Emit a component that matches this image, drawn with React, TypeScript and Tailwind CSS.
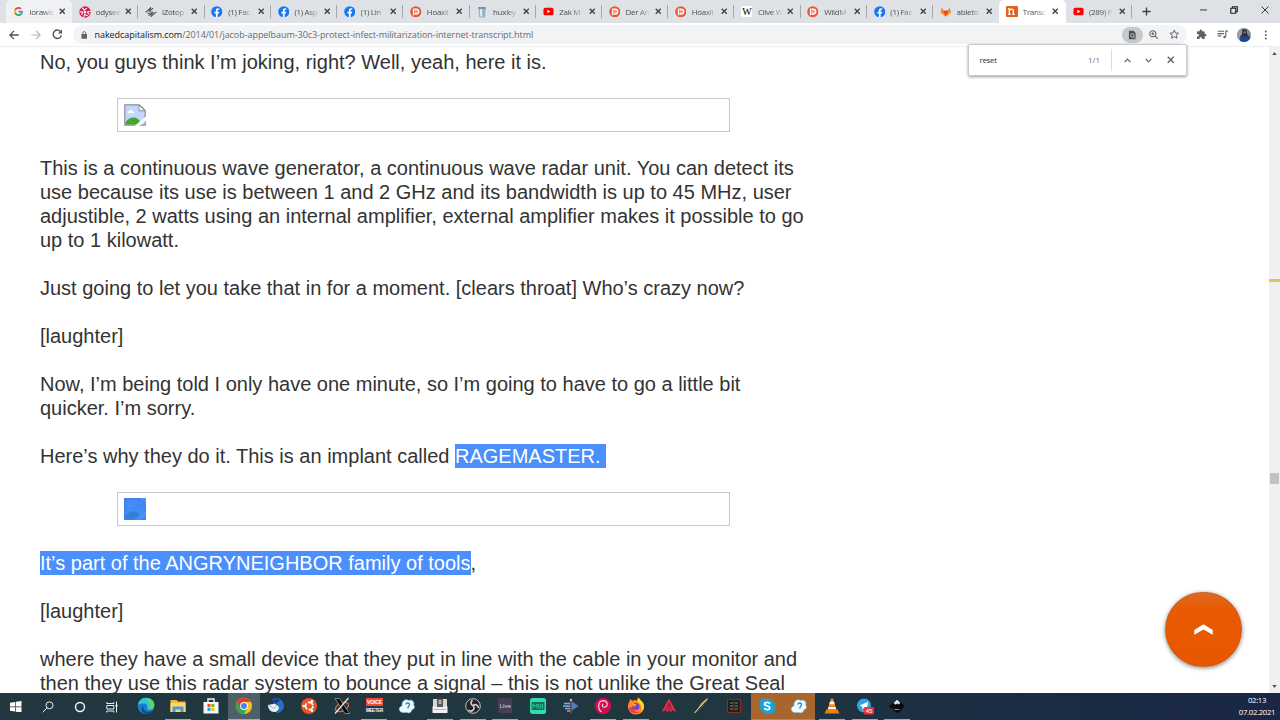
import type { ReactNode } from "react";

const UI = "font-['Open_Sans','Noto_Sans',sans-serif]";

function Facebook() {
  return (
    <svg viewBox="0 0 12 12" className="size-[11.5px]">
      <circle cx="6" cy="6" r="5.8" fill="#1877f2" />
      <path d="M5.1 11.8V7.7H3.6V6h1.5V4.7c0-1.5.9-2.3 2.2-2.3l1.3.1v1.5h-.8c-.7 0-.9.4-.9.9V6h1.6l-.3 1.7H6.9v4.1z" fill="#fff" />
    </svg>
  );
}
function Patreon() {
  return (
    <svg viewBox="0 0 12 12" className="size-[11.5px]">
      <circle cx="6" cy="6" r="5.8" fill="#e6583f" />
      <path d="M3 2.500h3.500a3.300 3.300 0 0 1 0 6.600H5L3 9.800z" fill="#fff" />
      <circle cx="6.600" cy="5.800" r="1.900" fill="#f0a393" />
      <path d="M4.500 3v6" stroke="#e6583f" strokeWidth=".7" />
    </svg>
  );
}
function YouTube() {
  return (
    <svg viewBox="0 0 12 12" className="size-[11px]">
      <rect x="0.5" y="1.9" width="11" height="8.2" rx="2" fill="#f00" />
      <path d="M4.8 4.2v3.6L8 6z" fill="#fff" />
    </svg>
  );
}
function Google() {
  return (
    <svg viewBox="0 0 48 48" className="size-[9px]">
      <path fill="#EA4335" d="M24 9.5c3.5 0 6.700 1.200 9.200 3.600l6.900-6.900C35.900 2.400 30.500 0 24 0 14.600 0 6.500 5.400 2.600 13.200l8 6.200C12.400 13.700 17.700 9.500 24 9.500z" />
      <path fill="#4285F4" d="M47 24.500c0-1.600-.2-3.100-.4-4.500H24v9h12.900c-.6 3-2.200 5.500-4.700 7.200l7.700 6C44.400 38 47 31.800 47 24.500z" />
      <path fill="#FBBC05" d="M10.500 28.600a14.500 14.500 0 0 1 0-9.200l-8-6.200a24 24 0 0 0 0 21.600z" />
      <path fill="#34A853" d="M24 48c6.500 0 11.900-2.100 15.900-5.800l-7.700-6c-2.200 1.400-4.900 2.300-8.200 2.300-6.300 0-11.600-4.200-13.500-9.900l-8 6.200C6.500 42.600 14.600 48 24 48z" />
    </svg>
  );
}
function Odysee() {
  return (
    <svg viewBox="0 0 12 12" className="size-[12px]">
      <circle cx="6" cy="6" r="5.7" fill="#dc1650" />
      <path d="M3.300 1.700 5.200 4.200 7.700 2.300M.8 5.800l2.900.1L2.600 8.900M4.900 11.300l.5-2.900 3.300 1.300M11.400 5.200 8.500 6l1.600 2.500" fill="none" stroke="#fff" strokeWidth="1.100" />
      <circle cx="6" cy="6.200" r="1.200" fill="#fff" />
    </svg>
  );
}
function Izotope() {
  return (
    <svg viewBox="0 0 12 12" className="size-[12px]" fill="none" stroke="#55595e" strokeWidth="1.100">
      <path d="M.6 6.300 5.200 2.300 4.700 4.700 8.200 2.200M3.300 5.300 8.700 6.600M3.500 9.800 6.900 7.300 6.700 9.700 11.400 5.800M2.500 7.300l5.800 1M5.500 1v2M6.300 9v2" />
    </svg>
  );
}
function Cup() {
  return (
    <svg viewBox="0 0 12 12" className="size-[12px]">
      <path d="M2.300 1h7.400L9 11.400H3.200z" fill="#8fb4c2" />
      <path d="M2.300 1h7.400l-.2 2h-7z" fill="#6d96a6" />
      <path d="M3.800 3h2.400v7.500H4.300z" fill="#dcebf0" />
    </svg>
  );
}
function Wiki() {
  return (
    <span className="flex size-[11px] items-center justify-center rounded-[2px] bg-white font-['Liberation_Serif',serif] text-[10px] leading-none text-black">
      W
    </span>
  );
}
function Gitlab() {
  return (
    <svg viewBox="0 0 12 12" className="size-[11.5px]">
      <path d="m6 11 5.400-4L10 1.500 8.300 5H3.700L2 1.500.6 7z" fill="#fc6d26" />
      <path d="M6 11 3.700 5h4.600z" fill="#e24329" />
      <path d="M.6 7 2 5l4 6zM11.400 7 10 5l-4 6z" fill="#fca326" />
    </svg>
  );
}
function Naked() {
  return (
    <span className="flex size-[11.500px] items-center justify-center rounded-[1px] bg-[#e0601c]">
      <svg viewBox="0 0 12 12" className="size-[11px]" fill="none" stroke="#fff" strokeWidth="1.500">
        <path d="M2 3.300h1.700V9M2.300 9.200h2.800M4 4.600C5.500 2.800 8 3 8 5v4M6.800 9.200h2.900" />
      </svg>
    </span>
  );
}

function Cross({ className = "size-[6.500px]" }: { className?: string }) {
  return (
    <svg viewBox="0 0 8 8" className={className} stroke="#3c4043" strokeWidth="1.600" fill="none">
      <path d="m.9.900 6.200 6.200M7.100.900.900 7.100" />
    </svg>
  );
}

type Tab = { icon: ReactNode; title: string; state?: "hover" | "active"; sep?: boolean };
const tabs: Tab[] = [
  { icon: <Google />, title: "lorawa", state: "hover" },
  { icon: <Odysee />, title: "odysee", sep: true },
  { icon: <Izotope />, title: "iZotop", sep: true },
  { icon: <Facebook />, title: "(1) Fac", sep: true },
  { icon: <Facebook />, title: "(1) Asp", sep: true },
  { icon: <Facebook />, title: "(1) Lin", sep: true },
  { icon: <Patreon />, title: "Hoaxil", sep: true },
  { icon: <Cup />, title: "huxley", sep: true },
  { icon: <YouTube />, title: "Zak M", sep: true },
  { icon: <Patreon />, title: "Der An", sep: true },
  { icon: <Patreon />, title: "Hoaxil", sep: true },
  { icon: <Wiki />, title: "Clive W", sep: true },
  { icon: <Patreon />, title: "WildM", sep: true },
  { icon: <Facebook />, title: "(1) Fac", sep: true },
  { icon: <Gitlab />, title: "ableto" },
  { icon: <Naked />, title: "Transc", state: "active" },
  { icon: <YouTube />, title: "(289) F", sep: true },
];

function TabItem({ tab }: { tab: Tab }) {
  const bg = tab.state === "active" ? "rounded-t-[5px] bg-white" : tab.state === "hover" ? "rounded-t-[5px] bg-[#f0f1f3]" : "";
  return (
    <div className={`flex h-[23px] w-[66.220px] shrink-0 items-center pl-[6.500px] ${bg}`}>
      <span className="flex w-[12px] shrink-0 justify-center">{tab.icon}</span>
      <span className="ml-[5px] w-[26px] shrink-0 whitespace-nowrap text-[8px] leading-[12px] tracking-[-0.300px] text-[#4a4e53] [mask-image:linear-gradient(to_right,black_50%,transparent_100%)]">
        {tab.title}
      </span>
      <span className="ml-[3.500px] flex w-[7px] shrink-0">
        <Cross />
      </span>
      <span className={`ml-auto h-[13px] w-px ${tab.sep ? "bg-[#a3a6aa]" : ""}`} />
    </div>
  );
}

function TabStrip() {
  return (
    <div className="flex h-[23px] items-center bg-[#dee1e6] pl-[6px]">
      {tabs.map((t, i) => (
        <TabItem key={i} tab={t} />
      ))}
      <svg viewBox="0 0 10 10" className="ml-[10px] size-[9px]" stroke="#3c4043" strokeWidth="1.500">
        <path d="M5 .5v9M.5 5h9" />
      </svg>
      <div className="mb-[4px] ml-auto flex items-center gap-[23px] pr-[11.500px]">
        <svg viewBox="0 0 8 8" className="size-[7px]" stroke="#222" strokeWidth="1">
          <path d="M0 4.500h8" />
        </svg>
        <svg viewBox="0 0 8 8" className="size-[8px]" fill="none" stroke="#222" strokeWidth="1.100">
          <path d="M.8 2.300h4.900v4.900H.8zM2.400 2.100V.7h4.900v4.900H5.900" />
        </svg>
        <svg viewBox="0 0 8 8" className="size-[8px]" stroke="#222" strokeWidth=".9">
          <path d="m.5.500 7 7m0-7-7 7" />
        </svg>
      </div>
    </div>
  );
}

function Toolbar() {
  return (
    <div className="flex h-[24px] items-center border-b border-[#eceef0] bg-white pl-[9px]">
      <svg viewBox="0 0 10 10" className="size-[10px]" fill="none" stroke="#4d5156" strokeWidth="1.300">
        <path d="M9.700 5H1.200M5 .900.900 5 5 9.100" />
      </svg>
      <svg viewBox="0 0 10 10" className="ml-[12px] size-[10px]" fill="none" stroke="#b4b6b9" strokeWidth="1.200">
        <path d="M.3 5h8.500M5 .900 9.100 5 5 9.100" />
      </svg>
      <svg viewBox="0 0 10 10" className="ml-[11px] size-[10.500px]" fill="none" stroke="#4d5156" strokeWidth="1.300">
        <path d="M8.600 3A4 4 0 1 0 9 6" />
        <path d="M9.500.500v3.700H5.800z" fill="#4d5156" stroke="none" />
      </svg>
      <div className="ml-[10px] flex h-[18.500px] w-[1114px] items-center rounded-full bg-[#f1f3f4] pl-[8px]">
        <svg viewBox="0 0 8 10" className="h-[8px] w-[6.500px]">
          <rect x=".5" y="3.700" width="7" height="6" rx=".8" fill="#5f6368" />
          <path d="M2.100 4V2.600a1.900 1.900 0 0 1 3.800 0V4" fill="none" stroke="#5f6368" strokeWidth="1.100" />
        </svg>
        <span className="ml-[7.500px] whitespace-nowrap text-[9px] leading-[14px] tracking-[-0.055px] text-[#676b70]">
          <span className="text-[#202124]">nakedcapitalism.com</span>
          /2014/01/jacob-appelbaum-30c3-protect-infect-militarization-internet-transcript.html
        </span>
        <div className="ml-auto flex items-center pr-[7px]">
          <span className="flex h-[16px] w-[21px] items-center justify-center rounded-full bg-[#c6c8ca]">
            <svg viewBox="0 0 10 12" className="h-[10px] w-[8.500px]">
              <path d="M1 1h5.500L9 3.500V11H1z" fill="#4d5156" />
              <circle cx="5" cy="6.500" r="2.100" fill="none" stroke="#d3d5d7" strokeWidth="1" />
              <path d="m6.500 8 1.500 2" stroke="#d3d5d7" />
            </svg>
          </span>
          <svg viewBox="0 0 10 10" className="ml-[6px] size-[9.500px]" fill="none" stroke="#5f6368" strokeWidth="1.100">
            <circle cx="4" cy="4" r="3.200" />
            <path d="M6.300 6.300 9.500 9.500M2.400 4h3.200M4 2.400v3.200" />
          </svg>
          <svg viewBox="0 0 12 12" className="ml-[11px] size-[10.500px]" fill="none" stroke="#5f6368" strokeWidth="1.100">
            <path d="m6 1.200 1.400 3.300 3.600.3-2.700 2.300.8 3.500L6 8.700l-3.100 1.900.8-3.500L1 4.800l3.600-.3z" />
          </svg>
        </div>
      </div>
      <svg viewBox="0 0 24 24" className="ml-[9px] size-[11px]" fill="#5f6368">
        <path d="M20.500 11H19V7a2 2 0 0 0-2-2h-4V3.500a2.500 2.500 0 0 0-5 0V5H4a2 2 0 0 0-2 2v3.800h1.500a2.700 2.700 0 0 1 0 5.400H2V20a2 2 0 0 0 2 2h3.800v-1.500a2.700 2.700 0 0 1 5.400 0V22H17a2 2 0 0 0 2-2v-4h1.500a2.500 2.500 0 0 0 0-5z" />
      </svg>
      <svg viewBox="0 0 12 12" className="ml-[10px] size-[11px]" fill="none" stroke="#5f6368" strokeWidth="1.200">
        <path d="M.7 2.500h7M.7 5h7M.7 7.500h4M9.600 8.500V2.300h2.200" />
        <circle cx="8.300" cy="8.800" r="1.400" fill="#5f6368" stroke="none" />
      </svg>
      <svg viewBox="0 0 14 14" className="ml-[9.500px] size-[14px]">
        <defs>
          <clipPath id="avatar">
            <circle cx="7" cy="7" r="7" />
          </clipPath>
        </defs>
        <g clipPath="url(#avatar)">
          <rect width="14" height="14" fill="#858b8c" />
          <path d="M0 0h5v9H0z" fill="#9ca19e" />
          <path d="M3 14V8l3-2h4l3 3v5z" fill="#1f4790" />
          <path d="M5.200 1.500h4.200L10.500 9 7 8 4.800 9z" fill="#262c38" />
          <circle cx="7.400" cy="4.300" r="1.300" fill="#8d7568" />
        </g>
      </svg>
      <svg viewBox="0 0 4 12" className="ml-[12.500px] h-[10px] w-[3.500px]" fill="#5f6368">
        <circle cx="2" cy="1.700" r="1.200" />
        <circle cx="2" cy="6" r="1.200" />
        <circle cx="2" cy="10.300" r="1.200" />
      </svg>
    </div>
  );
}

function FindBar() {
  return (
    <div className={`absolute left-[968px] top-[44px] z-10 flex h-[32px] w-[219px] items-center rounded-[2px] border border-[#c9cbcd] bg-white shadow-[0_1px_3px_rgba(0,0,0,0.4)] ${UI}`}>
      <span className="ml-[10.500px] text-[8px] tracking-[-0.350px] text-[#333]">reset</span>
      <span className="ml-auto text-[8px] text-[#6f7378]">1/1</span>
      <span className="ml-[10.500px] h-[22px] w-px bg-[#dadce0]" />
      <svg viewBox="0 0 8 8" className="ml-[12.500px] size-[7px]" fill="none" stroke="#5f6368" strokeWidth="1.400">
        <path d="M.7 5.800 4 2.500l3.300 3.300" />
      </svg>
      <svg viewBox="0 0 8 8" className="ml-[14px] size-[7px]" fill="none" stroke="#5f6368" strokeWidth="1.400">
        <path d="M.7 2.200 4 5.500l3.300-3.300" />
      </svg>
      <svg viewBox="0 0 8 8" className="ml-[14.500px] mr-[12px] size-[7.500px]" fill="none" stroke="#5f6368" strokeWidth="1.500">
        <path d="m.8.800 6.400 6.400M7.200.800.800 7.200" />
      </svg>
    </div>
  );
}

function BrokenImage({ selected = false }: { selected?: boolean }) {
  return (
    <div className={`ml-[77.400px] flex h-[34px] w-[612.800px] items-center border border-[#c8c8c8] pl-[5.400px] ${selected ? "mb-[24.700px]" : "mb-[24px]"}`}>
      <svg viewBox="0 0 22 22" className="size-[22px]">
        <path d="M.8.800h14.500l5.900 5.800v14.600H.8z" fill="#c3d6fb" stroke="#8c9091" strokeWidth="1.200" />
        <path d="M15 1v5.800h6z" fill="#f5f7fa" stroke="#8c9091" strokeWidth="1" />
        <path d="M3.500 8.500c0-1.500 1.600-1.800 2-1.200.5-2.300 3.300-1.800 3.300 0 1.200 0 1.500 1.500 1 1.900H4z" fill="#fff" />
        <path d="M1.400 20.600c0-4 4-7 8-7s6 2 7.500 7z" fill="#45a52e" />
        <path d="M10.500 22 22 12.500v4.300L15.500 22z" fill="#fff" />
        {selected && <rect width="22" height="22" fill="#2b7bf8" fillOpacity=".84" />}
      </svg>
    </div>
  );
}

function P({ children }: { children: ReactNode }) {
  return <p className="mb-[24px] whitespace-nowrap">{children}</p>;
}

function Article() {
  return (
    <main className="h-[646px] flex-1 overflow-hidden pl-[40px] pt-[3.300px] font-['Liberation_Sans',Arial,sans-serif] text-[20px] leading-[24px] text-[#333]">
      <P>No, you guys think I’m joking, right? Well, yeah, here it is.</P>
      <BrokenImage />
      <P>
        This is a continuous wave generator, a continuous wave radar unit. You can detect its
        <br />
        use because its use is between 1 and 2 GHz and its bandwidth is up to 45 MHz, user
        <br />
        adjustible, 2 watts using an internal amplifier, external amplifier makes it possible to go
        <br />
        up to 1 kilowatt.
      </P>
      <P>Just going to let you take that in for a moment. [clears throat] Who’s crazy now?</P>
      <P>[laughter]</P>
      <P>
        Now, I’m being told I only have one minute, so I’m going to have to go a little bit
        <br />
        quicker. I’m sorry.
      </P>
      <P>
        Here’s why they do it. This is an implant called{" "}
        <span className="inline-block bg-[#4a8ffb] pr-[5px] text-white">RAGEMASTER.</span>
      </P>
      <BrokenImage selected />
      <P>
        <span className="inline-block bg-[#4a8ffb] text-white">It’s part of the ANGRYNEIGHBOR family of tools</span>,
      </P>
      <P>[laughter]</P>
      <P>
        where they have a small device that they put in line with the cable in your monitor and
        <br />
        then they use this radar system to bounce a signal – this is not unlike the Great Seal
      </P>
    </main>
  );
}

function Scrollbar() {
  return (
    <div className="flex h-[646px] w-[11px] flex-col items-center bg-[#f0f0f0] py-[5px]">
      <svg viewBox="0 0 6 4" className="h-[3px] w-[5px]" fill="#505050">
        <path d="m3 0 3 4H0z" />
      </svg>
      <div className="mt-[224px] h-[2.500px] w-full bg-[#dcc650]" />
      <div className="mt-[191px] h-[11.500px] w-[9px] bg-[#c1c1c1]" />
      <svg viewBox="0 0 6 4" className="mt-auto h-[3px] w-[5px]" fill="#505050">
        <path d="m3 4 3-4H0z" />
      </svg>
    </div>
  );
}

type App = { icon: ReactNode; kind?: "run" | "focus" | "alert" };
const V = "size-[18px]";

const apps: App[] = [
  {
    icon: (
      <svg viewBox="0 0 18 18" className={V}>
        <circle cx="9" cy="9" r="8.300" fill="#1680cf" />
        <path d="M1 8C1.500 3.500 5 .7 9 .7c5 0 8.300 3.500 8.300 7.300 0 3-2.200 4.500-4.700 4.500-2 0-3-1-2.500-2 .8-1.600-.3-4-3-4C4.300 6.500 2 7 1 8z" fill="#35c4d2" />
        <path d="M10 1c5 .5 7.300 4 7.300 7 0 3-2.200 4.500-4.700 4.500-1 0-1.800-.3-2.200-.6 3 0 4.600-4.500-.4-7.900z" fill="#5ad66a" />
        <path d="M6.500 9c-1 3 1.500 6.500 6.300 5.500l3-.8C14 17 9 18 6 15.500 3.500 13 4.500 10 6.500 9z" fill="#0b4c93" />
      </svg>
    ),
  },
  {
    kind: "run",
    icon: (
      <svg viewBox="0 0 18 18" className={V}>
        <path d="M1.500 3h6l1.500 1.500h7.500V15h-15z" fill="#f0b83c" />
        <path d="M1.500 6h15v9h-15z" fill="#ffd768" />
        <path d="M3.500 9.500h11V15h-3v-2.500h-5V15h-3z" fill="#4b9bd8" />
      </svg>
    ),
  },
  {
    icon: (
      <svg viewBox="0 0 18 18" className={V}>
        <path d="M6 6V2h6v4" fill="none" stroke="#f3f3f3" strokeWidth="1.400" />
        <path d="M1.500 5h15v11.500h-15z" fill="#f6f6f6" />
        <path d="M5.500 7h3v3h-3z" fill="#f25022" />
        <path d="M9.300 7h3v3h-3z" fill="#7fba00" />
        <path d="M5.500 10.800h3v3h-3z" fill="#00a4ef" />
        <path d="M9.300 10.800h3v3h-3z" fill="#ffb900" />
      </svg>
    ),
  },
  {
    kind: "focus",
    icon: (
      <svg viewBox="0 0 18 18" className={V}>
        <circle cx="9" cy="9" r="8" fill="#fbc116" />
        <path d="M2.100 5A8 8 0 0 0 9 17l3.400-6L9 9z" fill="#2da94f" />
        <path d="M2.100 5A8 8 0 0 1 15.900 5H9L5.600 11z" fill="#e33b2e" />
        <circle cx="9" cy="9" r="3.900" fill="#fff" />
        <circle cx="9" cy="9" r="3" fill="#4285f4" />
      </svg>
    ),
  },
  {
    icon: (
      <svg viewBox="0 0 18 18" className={V}>
        <path d="M5 2.500C9-.5 17 2 17 9c0 4-4 7.500-8.500 7 4-2 4-6 2-8.500z" fill="#2470c8" />
        <path d="M4 5c2-3.500 7-4 9-1.500L9 7z" fill="#123f86" />
        <path d="M1 8 8 6.500l4 3.500c0 3-2 5-5 5-3.500 0-6-3-6-7z" fill="#e6edf5" />
        <path d="m1.500 8 5.500 3.500L11 8" fill="none" stroke="#9fb4cc" />
      </svg>
    ),
  },
  {
    icon: (
      <svg viewBox="0 0 18 18" className={V}>
        <circle cx="9" cy="9" r="8" fill="#e95420" />
        <circle cx="9.200" cy="9" r="3.700" fill="none" stroke="#fff" strokeWidth="1.700" strokeDasharray="6.300 1.450" />
        <circle cx="3.800" cy="9" r="1.300" fill="#fff" />
        <circle cx="11.900" cy="4.300" r="1.300" fill="#fff" />
        <circle cx="11.900" cy="13.700" r="1.300" fill="#fff" />
      </svg>
    ),
  },
  {
    icon: (
      <svg viewBox="0 0 18 18" className={V}>
        <ellipse cx="9" cy="10" rx="7" ry="4" fill="none" stroke="#d76d35" strokeWidth="1.300" transform="rotate(-25 9 10)" />
        <path d="M2 1.500h4.500l10 15H12z" fill="#0a0a0a" stroke="#bdbdbd" strokeWidth=".6" />
        <path d="M15.500 1 2 16.500" stroke="#e6e6e6" strokeWidth="1.300" />
      </svg>
    ),
  },
  {
    kind: "run",
    icon: (
      <span className="flex w-[17px] flex-col text-center font-['Liberation_Sans',sans-serif] text-[5px] font-bold leading-[7px] text-white">
        <span className="h-[8px] bg-[#f14a32] leading-[8px] tracking-[-0.100px]">VOICE</span>
        <span className="h-[8px] text-[4.500px] leading-[9px] tracking-[-0.300px]">MEETER</span>
      </span>
    ),
  },
  { icon: <CloudFour /> },
  {
    kind: "run",
    icon: (
      <svg viewBox="0 0 18 18" className={V}>
        <path d="M2 2h14v8H2z" fill="#d5d5d5" />
        <path d="M1.500 9.500h15V16h-15z" fill="#f0f0f0" />
        <path d="M6 1.500h6V10H6z" fill="#575757" />
        <path d="M7.500 3h3v4h-3z" fill="#bcaaa4" />
        <path d="M3 12.500h12" stroke="#b4b4b4" />
      </svg>
    ),
  },
  {
    kind: "run",
    icon: (
      <svg viewBox="0 0 18 18" className={V}>
        <circle cx="9" cy="9" r="7.300" fill="#25232a" stroke="#d0d0d0" strokeWidth=".9" />
        <path d="M8.600 3.200a3 3 0 0 0 .5 5.500M14.300 11a3 3 0 0 0-5.200-2.300M4.500 13a3 3 0 0 0 4.600-4.300" fill="none" stroke="#d0d0d0" strokeWidth="1.600" />
      </svg>
    ),
  },
  {
    kind: "run",
    icon: (
      <span className="flex h-[15px] w-[14px] items-center justify-center bg-[#453f54] font-['Open_Sans',sans-serif] text-[6px] font-semibold leading-none text-[#c6c0d6]">
        Live
      </span>
    ),
  },
  {
    icon: (
      <svg viewBox="0 0 18 18" className={V}>
        <rect x="1" y="1" width="16" height="16" rx="2.500" fill="#2fdcaa" />
        <rect x="2.500" y="5" width="13" height="8" rx="1" fill="#176c5b" />
        <path d="M4 11.500V7l2 2.500L8 7v4.500M9.800 7v4.500M11.700 7v4.500M13.500 7v4.500" stroke="#2fdcaa" fill="none" strokeWidth=".8" />
      </svg>
    ),
  },
  {
    icon: (
      <svg viewBox="0 0 18 18" className={V}>
        <path d="M2 6.500h6M1 9h7M3 11.500h5M5 14h3" stroke="#7faede" strokeWidth="1.500" />
        <path d="M10 4.500 16.500 9 10 13.500z" fill="#4a7fc4" />
        <path d="M9 2v14" stroke="#d35548" strokeWidth="1" />
        <circle cx="9" cy="3" r="1.300" fill="#c9b3b3" />
      </svg>
    ),
  },
  {
    kind: "run",
    icon: (
      <svg viewBox="0 0 18 18" className={V}>
        <circle cx="9" cy="9" r="8.200" fill="#cf0b52" />
        <path d="M7.500 15C3 11.500 4 4 9.200 3.700c4.500 0 5.500 5.600 1.300 6.500-2.300.3-3-2.600-1.200-3.500" fill="none" stroke="#f7d3df" strokeWidth="1.200" />
      </svg>
    ),
  },
  {
    kind: "run",
    icon: (
      <svg viewBox="0 0 18 18" className={V}>
        <path d="M2 5c1-1.500 1-2.500 1-3 1.500.5 2 1.500 2.500 2C7 2.500 9 3 10 3.500c0-1.500 1-2.700 1.500-3 .5 2 5.500 4 5.500 9 0 4.500-3.500 8-8 8s-8-3.500-8-8C1 8 1.500 6 2 5z" fill="#ff8a1e" />
        <path d="M11.500.500c.5 2 5.500 4 5.500 9 0 2-1 4-2.500 5.500C15.500 9 13 6 10.500 5z" fill="#ffd43c" />
        <path d="M1.500 11C3 16 9 17.500 13 15.500c-4 0-7-2-7-6z" fill="#f23557" />
        <circle cx="9" cy="9.500" r="3.500" fill="#7b3fd0" />
        <path d="M5 6.500c2 0 3 1 4.500 1-.5 1.500-2 1-2.500 2.500z" fill="#ffb02a" />
      </svg>
    ),
  },
  {
    icon: (
      <svg viewBox="0 0 18 18" className={V}>
        <path d="M9 1.500 16.500 15 12 13l-1 2.500L9 13l-2 2.500L6 13l-4.500 2z" fill="#e22c4a" />
        <path d="m9 6-3 7M9 6v7m0-7 3 7" stroke="#7c1a33" strokeWidth=".8" />
      </svg>
    ),
  },
  {
    icon: (
      <svg viewBox="0 0 18 18" className={V}>
        <path d="M15.500 2C10 4 7 8 6 12.500 11 10.500 13 7 15.500 2z" fill="#b58d35" />
        <path d="M15.500 1.500 2.500 16" stroke="#e6dfbf" strokeWidth="1.100" />
        <path d="M14 5 7 12.500" stroke="#39402e" strokeWidth="1.200" />
      </svg>
    ),
  },
  {
    icon: (
      <svg viewBox="0 0 18 18" className={V}>
        <rect x="2.500" y="2.500" width="13" height="13" rx="1" fill="#211c1d" stroke="#8c2c25" strokeWidth="1.200" />
        <path d="M5 6h3M10 6h3M5 9h3M10 9h3M5 12h3M10 12h3" stroke="#38b45c" strokeWidth="1.100" />
        <path d="M9 4v10" stroke="#7c342d" />
      </svg>
    ),
  },
  {
    kind: "alert",
    icon: (
      <svg viewBox="0 0 18 18" className={V}>
        <path d="M5 1.500c1.500-.3 2.500 0 3 .3 5-.7 9.500 3 8.700 8.200 1.300 4-2 7.500-6 6.300C6 17 1.700 13.500 2 8.500 1 5.500 2 2.500 5 1.500z" fill="#14a5e0" />
        <path d="M12 6.800C11 5 6.500 4.700 6.500 7c0 2.500 5.300 1.300 5.300 3.800 0 2.300-4.500 2.200-5.500.3" fill="none" stroke="#fff" strokeWidth="1.700" />
      </svg>
    ),
  },
  { kind: "alert", icon: <CloudFour /> },
  {
    kind: "run",
    icon: (
      <svg viewBox="0 0 18 18" className={V}>
        <path d="M8 1.500h2L13.500 13h-9z" fill="#f58a1c" />
        <path d="M7.100 4.500h3.800l.8 2.800H6.300zM5.500 10h7l.7 2.300H4.800z" fill="#f2f2f2" />
        <path d="M3.500 12.500h11l2 4h-15z" fill="#ee7d12" />
      </svg>
    ),
  },
  {
    kind: "run",
    icon: (
      <svg viewBox="0 0 18 18" className={V}>
        <circle cx="8" cy="8.500" r="7" fill="#2fa3dc" />
        <path d="m3.500 8.500 8.700-3.700-1.400 8-2.800-2-1.500 1.400-.3-2.600z" fill="#fff" />
        <rect x="8" y="10" width="10" height="7.500" rx="1" fill="#e5353e" />
        <text x="13" y="15.900" fontSize="6" textAnchor="middle" fill="#fff" fontFamily="Liberation Sans, sans-serif">45</text>
      </svg>
    ),
  },
  {
    kind: "run",
    icon: (
      <svg viewBox="0 0 18 18" className={V}>
        <path d="m9 1.500 7 7c1.500 1.700-1 2.200-2 2.700l-1 2.300L9.500 16 5 13.500l1-1.500-3.500-1C1 10.500 1 9.500 2 8.500z" fill="#090b10" />
        <path d="m9 2.500 3.300 3.300-1.500 1.700-1.600-1-1.500 1.200L5.500 6z" fill="#dfe3e9" />
        <path d="M6.500 12.500h5" stroke="#8c929b" />
      </svg>
    ),
  },
];

function CloudFour() {
  return (
    <svg viewBox="0 0 18 18" className={V}>
      <path d="M5 15.500c-4.500 0-5-6-.8-6.500C3 4 8 1.500 10.500 3.500c4-1.500 6.500 2 5 4.500 2 2 .5 4.500-1.500 4.500-.5 3-3 4-4.500 3z" fill="#eefaff" stroke="#7cc9ea" strokeWidth=".7" />
      <path d="M8 7.500c0-2 3.500-2 3.500 0 0 1.600-1.700 1.700-1.700 4" stroke="#2e86b0" strokeWidth="1.300" fill="none" />
    </svg>
  );
}

const kinds = {
  none: "bg-transparent",
  run: "bg-[#76b2e6]",
  focus: "bg-[#76b9ed]",
  alert: "bg-[#f2750f]",
};

function TaskButton({ app }: { app: App }) {
  const wide = app.kind === "focus" || app.kind === "alert";
  const fill = app.kind === "focus" ? "bg-[#4f6168]" : app.kind === "alert" ? "bg-[#a8662f]" : "";
  return (
    <div className="flex w-[32.700px] shrink-0 justify-center">
      <div className={`flex flex-col items-center ${wide ? "w-[32px]" : "w-[26px]"} ${fill}`}>
        <div className="flex h-[25.700px] items-center">{app.icon}</div>
        <div className={`h-[1.300px] w-full ${kinds[app.kind ?? "none"]}`} />
      </div>
    </div>
  );
}

function Taskbar() {
  return (
    <footer className={`flex h-[27px] items-stretch bg-[linear-gradient(to_right,#22373f_0%,#213740_55%,#1c2e42_75%,#192645_100%)] text-white ${UI}`}>
      <div className="flex w-[129.300px] items-center">
        <span className="flex w-[32px] justify-center">
          <svg viewBox="0 0 12 12" className="size-[11.500px]" fill="#fff">
            <path d="M0 1.700 5.300 1v4.700H0zM6 .9 12 0v5.700H6zM0 6.400h5.300V11L0 10.300zM6 6.400h6V12l-6-.9z" />
          </svg>
        </span>
        <span className="flex w-[32px] justify-center">
          <svg viewBox="0 0 12 12" className="size-[12px]" fill="none" stroke="#e9eeee" strokeWidth="1">
            <circle cx="7.500" cy="4.300" r="3.500" />
            <path d="M5 6.900.8 11.300" />
          </svg>
        </span>
        <span className="flex w-[32px] justify-center">
          <svg viewBox="0 0 12 12" className="size-[12px]" fill="none" stroke="#f4f6f6" strokeWidth="1.500">
            <circle cx="6" cy="6" r="4.500" />
          </svg>
        </span>
        <span className="flex w-[32px] justify-center">
          <svg viewBox="0 0 12 12" className="size-[12px]" fill="none" stroke="#e9eeee" strokeWidth="1">
            <path d="M.8 1v1.500h7V1M.8 4.500h7v3.500h-7zM.8 11.500V10h7v1.500M10.500.500v11" />
            <path d="M9.500 3.700h2v1.800h-2z" fill="#fff" stroke="none" />
          </svg>
        </span>
      </div>
      {apps.map((a, i) => (
        <TaskButton key={i} app={a} />
      ))}
      <div className="ml-auto flex w-[46px] flex-col items-center pt-[1px] text-[7.800px] leading-[12px] tracking-[-0.350px]">
        <span>02:13</span>
        <span>07.02.2021</span>
      </div>
    </footer>
  );
}

export default function App() {
  return (
    <div className="relative flex h-[720px] w-[1280px] flex-col overflow-hidden bg-white">
      <header className={UI}>
        <TabStrip />
        <Toolbar />
      </header>
      <FindBar />
      <div className="flex h-[646px]">
        <Article />
        <Scrollbar />
      </div>
      <button className="absolute left-[1164.500px] top-[592px] flex h-[75px] w-[77px] items-center justify-center rounded-full border border-[#c9560f] bg-[linear-gradient(to_bottom,#e06a20_0%,#e95a03_22%,#e85600_100%)] shadow-[0_1px_4px_rgba(0,0,0,0.5)]" aria-label="Back to top">
        <svg viewBox="0 0 20 12" className="h-[12px] w-[19px]" fill="#fff">
          <path d="m10 0 9.700 6v5L10 5.500.3 11V6z" />
        </svg>
      </button>
      <Taskbar />
    </div>
  );
}
